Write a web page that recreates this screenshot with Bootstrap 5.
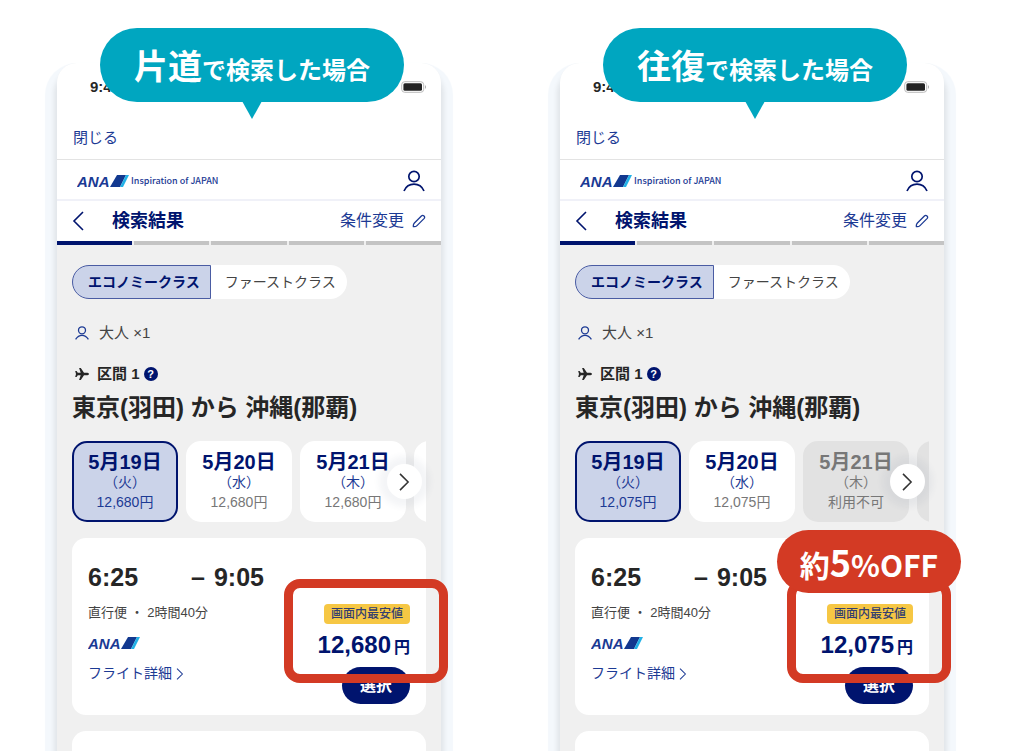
<!DOCTYPE html>
<html lang="ja">
<head>
<meta charset="utf-8">
<meta name="viewport" content="width=device-width, initial-scale=1">
<title>片道と往復の運賃比較</title>
<link href="https://cdn.jsdelivr.net/npm/bootstrap@5.3.0/dist/css/bootstrap.min.css" rel="stylesheet">
<style>
:root { --navy:#00146e; --line-blue:#1c3a94; --teal:#00a6c0; --red:#d33a24; --soft:#cbd3e9; --ink:#262626; }
body { font-family:"Liberation Sans","Noto Sans CJK JP",sans-serif; color:var(--ink); background:#fff; }
.jp { font-family:"Noto Sans CJK JP",sans-serif; }
.navy { color:var(--navy); }
.compare { display:grid; grid-template-columns:repeat(2,minmax(0,1fr)); gap:119px; padding:63px 80px 0 57px; min-height:100vh; }
.phone { border-radius:20px 20px 0 0; background:#f0f0f0; box-shadow:0 10px 5px 3px rgba(0,0,0,.08), 0 12px 1px 12px #f4f8fc; }
.callout { top:-35px; left:43px; right:37px; height:74px; border-radius:37px; background:var(--teal); z-index:3; line-height:74px; font-size:24px; font-weight:700; }
.callout strong { font-size:34px; font-weight:700; }
.callout::after { content:""; position:absolute; top:73px; left:50%; margin-left:-10px; border:10px solid transparent; border-top:18px solid var(--teal); border-bottom:0; }
.phone-top { background:#fff; border-radius:20px 20px 0 0; }
.status { height:48px; padding:0 14px 0 33px; font-size:15px; font-weight:700; }
.close-row { height:49px; padding:0 16px; font-size:15px; line-height:54px; border-bottom:1px solid #e3e3e3; }
.close-row a, .blue { color:var(--line-blue); }
.brand { height:41px; padding:2px 16px 0 20px; border-bottom:2px solid #f0f1f8; }
.tagline { font-size:9px; font-weight:500; color:var(--line-blue); }
.titlebar { height:40px; padding:0 15px; }
.titlebar h1 { font-size:18px; line-height:40px; font-weight:700; margin-left:28px; }
.titlebar a { font-size:16px; line-height:40px; }
.steps { gap:2px; height:4px; background:#f0f0f0; }
.steps i { flex:1; background:#c4c4c4; }
.steps i:first-child { background:var(--navy); }
.content { padding:20px 15px 0; }
.tabs button { height:34px; border:0; background:#fff; font-size:14px; padding:0 11px 0 14px; border-radius:0 17px 17px 0; color:#444; line-height:32px; }
.tabs button.on { background:var(--soft); border:1px solid #4a5ca3; color:var(--navy); font-weight:700; border-radius:17px 0 0 17px; padding:0 10px 0 15px; }
.pax { font-size:15px; line-height:20px; margin-top:24px; gap:10px; padding-left:3px; color:#444; }
.leg { font-size:15px; line-height:20px; margin-top:21px; font-weight:700; padding-left:3px; }
.route { font-size:24px; line-height:30px; font-weight:700; margin:9px 0 18px; }
.help { width:14px; height:14px; border-radius:50%; background:var(--navy); font-size:11px; line-height:14px; margin-left:4px; }
.days { overflow:hidden; gap:8px; }
.day { flex:0 0 106px; height:81px; border:2px solid #fff; border-radius:15px; background:#fff; padding:0; text-align:center; color:#777; font-size:14px; line-height:20px; white-space:nowrap; }
.day b { display:block; font-size:20px; line-height:22px; color:var(--navy); }
.day span { display:block; line-height:19px; color:var(--line-blue); }
.day.on { background:var(--soft); border-color:var(--navy); color:var(--line-blue); }
.day.off, .day.off b, .day.off span { color:#777; }
.day.off { background:#e2e2e2; border-color:#e2e2e2; }
.next { right:4px; top:23px; width:35px; height:35px; border:0; border-radius:50%; background:#fff; padding:0; box-shadow:0 0 6px 8px rgba(60,80,120,.06); color:#333; line-height:30px; }
.fare { background:#fff; border-radius:14px; padding:25px 16px 0; margin-top:16px; height:177px; }
.more { border-radius:14px 14px 0 0; background:#fff; margin-top:16px; min-height:20px; }
.times { font-size:25px; line-height:28px; font-weight:700; }
.times .dash { margin-left:53px; margin-right:9px; }
.info { font-size:13px; line-height:20px; margin-top:12px; color:#444; }
.details { font-size:14px; line-height:20px; margin-top:12px; }
.offer { padding-top:41px; }
.cheap { background:#f6c744; border-radius:4px; font-size:12px; line-height:20px; padding:0 7px; color:#333e70; font-weight:500; }
.price { font-size:24px; line-height:28px; font-weight:700; margin-top:7px; }
.price small { font-size:16px; font-weight:700; margin-left:3px; }
.pick { width:68px; height:37px; border:0; border-radius:19px; background:var(--navy); color:#fff; font-size:16px; font-weight:700; margin-top:5px; }
.ring { top:16px; right:-38px; width:164px; height:104px; border:9px solid var(--red); border-radius:16px; }
.off-tag { top:-33px; right:-48px; width:184px; height:63px; border-radius:32px; background:var(--red); font-size:30px; font-weight:700; line-height:62px; }
.off-tag strong { font-size:36px; font-weight:700; }
</style>
</head>
<body>
<svg class="d-none" xmlns="http://www.w3.org/2000/svg">
  <symbol id="ana" viewBox="0 0 54 16">
    <text x="0" y="14" font-family="Liberation Sans" font-size="15" font-weight="700" font-style="italic" fill="#1a3a94">ANA</text>
    <path d="M40 2H49L43 14H33Z" fill="#12388f"/><path d="M49 2H52L46 14H43Z" fill="#22b1e6"/>
  </symbol>
  <symbol id="person" viewBox="0 0 22 22"><g fill="none" stroke="currentColor" stroke-width="1.7"><circle cx="11" cy="6.5" r="5.2"/><path d="M1 21C3 16.5 6.5 14.2 11 14.2S19 16.5 21 21"/></g></symbol>
  <symbol id="person-sm" viewBox="0 0 14 14"><g fill="none" stroke="currentColor" stroke-width="1.3"><circle cx="7" cy="4.3" r="3.5"/><path d="M.6 13.4C2.4 10.6 4.4 9.4 7 9.4S11.6 10.6 13.4 13.4"/></g></symbol>
  <symbol id="pencil" viewBox="0 0 14 14"><path d="M1.4 12.6Q1 10.4 2.4 9L9.4 2Q10.7.8 12 2T12 4.6L5 11.6Q3.6 13 1.4 12.6Z" fill="none" stroke="currentColor" stroke-width="1.3"/></symbol>
  <symbol id="left" viewBox="0 0 12 20"><path d="M11 1 2 10 11 19" fill="none" stroke="currentColor" stroke-width="1.6"/></symbol>
  <symbol id="right" viewBox="0 0 12 20"><path d="M1 1 10 10 1 19" fill="none" stroke="currentColor" stroke-width="1.7"/></symbol>
  <symbol id="plane" viewBox="0 0 14 14"><path d="M14 7Q14 8 12.5 8.2H9L5.8 13H4.1L5.7 8.2H2.8L1.6 10H.2L1 7 .2 4H1.6L2.8 5.8H5.7L4.1 1H5.8L9 5.8H12.5Q14 6 14 7Z" fill="#262626"/></symbol>
  <symbol id="battery" viewBox="0 0 26 12"><rect x=".7" y=".7" width="22" height="10.6" rx="3" fill="#fff" stroke="#bbb"/><rect x="2.4" y="2.2" width="18.6" height="7.6" rx="1.5" fill="#222"/><path d="M24 4Q26 6 24 8Z" fill="#aaa"/></symbol>
</svg>
<main class="compare">
  <section class="phone position-relative d-flex flex-column">
    <div class="callout jp position-absolute text-center text-white"><strong>片道</strong>で検索した場合</div>
    <header class="phone-top">
      <div class="status d-flex align-items-center justify-content-between"><span>9:41</span><svg width="26" height="12"><use href="#battery"/></svg></div>
      <div class="close-row"><a href="#" class="text-decoration-none">閉じる</a></div>
      <div class="brand d-flex align-items-center"><svg width="54" height="16" role="img" aria-label="ANA"><use href="#ana"/></svg><span class="tagline jp">Inspiration of JAPAN</span><a href="#" class="navy ms-auto d-flex" aria-label="マイページ"><svg width="22" height="22"><use href="#person"/></svg></a></div>
      <div class="titlebar d-flex align-items-center navy"><a href="#" class="navy d-flex" aria-label="戻る"><svg width="12" height="20"><use href="#left"/></svg></a><h1 class="mb-0">検索結果</h1><a href="#" class="blue text-decoration-none ms-auto d-flex align-items-center gap-2">条件変更<svg width="14" height="14"><use href="#pencil"/></svg></a></div>
      <div class="steps d-flex"><i></i><i></i><i></i><i></i><i></i></div>
    </header>
    <div class="content d-flex flex-column flex-grow-1">
      <div class="tabs d-flex"><button class="on">エコノミークラス</button><button>ファーストクラス</button></div>
      <div class="pax d-flex align-items-center"><svg class="blue" width="14" height="14"><use href="#person-sm"/></svg>大人 ×1</div>
      <div class="leg d-flex align-items-center"><svg class="me-2" width="14" height="14"><use href="#plane"/></svg>区間 1<span class="help text-white text-center">?</span></div>
      <h2 class="route">東京(羽田) から 沖縄(那覇)</h2>
      <div class="position-relative">
        <div class="days d-flex">
          <button class="day on"><b>5月19日</b><span>（火）</span>12,680円</button>
          <button class="day"><b>5月20日</b><span>（水）</span>12,680円</button>
          <button class="day"><b>5月21日</b><span>（木）</span>12,680円</button>
          <button class="day" aria-label="次の日"></button>
        </div>
        <button class="next position-absolute" aria-label="次へ"><svg width="11" height="18"><use href="#right"/></svg></button>
      </div>
      <article class="fare d-flex justify-content-between">
        <div>
          <div class="times">6:25<span class="dash">–</span>9:05</div>
          <div class="info">直行便 ・ 2時間40分</div>
          <svg class="d-block mt-2 pt-1" width="54" height="20" role="img" aria-label="ANA"><use href="#ana"/></svg>
          <div class="details"><a href="#" class="blue text-decoration-none">フライト詳細 <svg width="8" height="12"><use href="#right"/></svg></a></div>
        </div>
        <div class="offer position-relative d-flex flex-column align-items-end">
          <span class="cheap">画面内最安値</span>
          <div class="price navy">12,680<small>円</small></div>
          <button class="pick">選択</button>
          <div class="ring position-absolute"></div>
        </div>
      </article>
      <div class="more flex-grow-1"></div>
    </div>
  </section>
  <section class="phone position-relative d-flex flex-column">
    <div class="callout jp position-absolute text-center text-white"><strong>往復</strong>で検索した場合</div>
    <header class="phone-top">
      <div class="status d-flex align-items-center justify-content-between"><span>9:41</span><svg width="26" height="12"><use href="#battery"/></svg></div>
      <div class="close-row"><a href="#" class="text-decoration-none">閉じる</a></div>
      <div class="brand d-flex align-items-center"><svg width="54" height="16" role="img" aria-label="ANA"><use href="#ana"/></svg><span class="tagline jp">Inspiration of JAPAN</span><a href="#" class="navy ms-auto d-flex" aria-label="マイページ"><svg width="22" height="22"><use href="#person"/></svg></a></div>
      <div class="titlebar d-flex align-items-center navy"><a href="#" class="navy d-flex" aria-label="戻る"><svg width="12" height="20"><use href="#left"/></svg></a><h1 class="mb-0">検索結果</h1><a href="#" class="blue text-decoration-none ms-auto d-flex align-items-center gap-2">条件変更<svg width="14" height="14"><use href="#pencil"/></svg></a></div>
      <div class="steps d-flex"><i></i><i></i><i></i><i></i><i></i></div>
    </header>
    <div class="content d-flex flex-column flex-grow-1">
      <div class="tabs d-flex"><button class="on">エコノミークラス</button><button>ファーストクラス</button></div>
      <div class="pax d-flex align-items-center"><svg class="blue" width="14" height="14"><use href="#person-sm"/></svg>大人 ×1</div>
      <div class="leg d-flex align-items-center"><svg class="me-2" width="14" height="14"><use href="#plane"/></svg>区間 1<span class="help text-white text-center">?</span></div>
      <h2 class="route">東京(羽田) から 沖縄(那覇)</h2>
      <div class="position-relative">
        <div class="days d-flex">
          <button class="day on"><b>5月19日</b><span>（火）</span>12,075円</button>
          <button class="day"><b>5月20日</b><span>（水）</span>12,075円</button>
          <button class="day off"><b>5月21日</b><span>（木）</span>利用不可</button>
          <button class="day off" aria-label="次の日"></button>
        </div>
        <button class="next position-absolute" aria-label="次へ"><svg width="11" height="18"><use href="#right"/></svg></button>
      </div>
      <article class="fare d-flex justify-content-between">
        <div>
          <div class="times">6:25<span class="dash">–</span>9:05</div>
          <div class="info">直行便 ・ 2時間40分</div>
          <svg class="d-block mt-2 pt-1" width="54" height="20" role="img" aria-label="ANA"><use href="#ana"/></svg>
          <div class="details"><a href="#" class="blue text-decoration-none">フライト詳細 <svg width="8" height="12"><use href="#right"/></svg></a></div>
        </div>
        <div class="offer position-relative d-flex flex-column align-items-end">
          <span class="cheap">画面内最安値</span>
          <div class="price navy">12,075<small>円</small></div>
          <button class="pick">選択</button>
          <div class="ring position-absolute"></div>
          <div class="off-tag jp position-absolute text-center text-white">約<strong>5</strong>%OFF</div>
        </div>
      </article>
      <div class="more flex-grow-1"></div>
    </div>
  </section>
</main>
<script src="https://cdn.jsdelivr.net/npm/bootstrap@5.3.0/dist/js/bootstrap.bundle.min.js"></script>
</body>
</html>
